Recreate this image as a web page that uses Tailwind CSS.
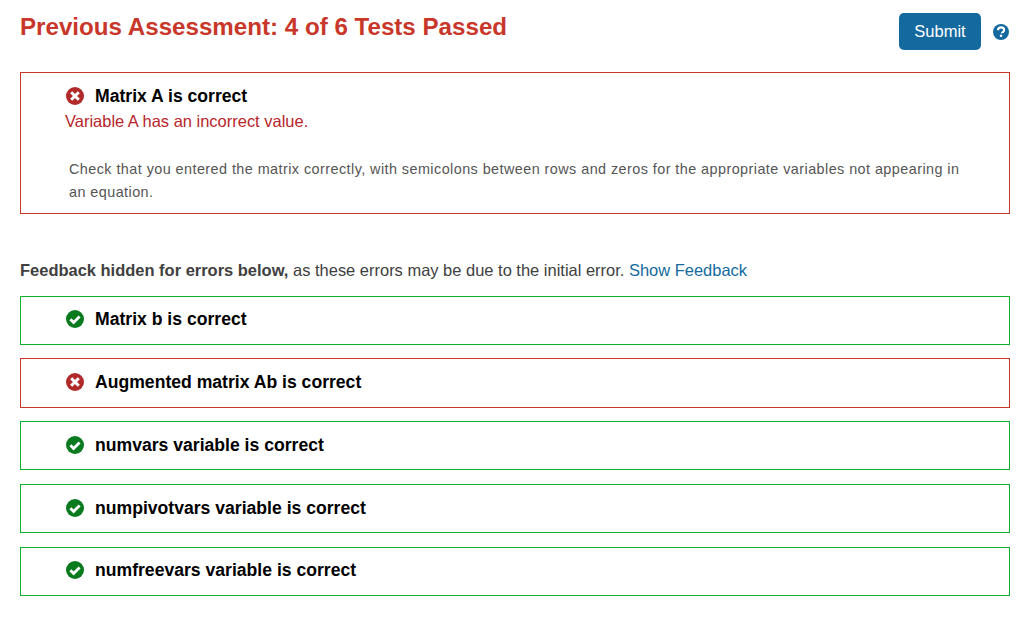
<!DOCTYPE html>
<html lang="en">
  <head>
    <meta charset="UTF-8" />
    <title>Previous Assessment</title>
    <script src="https://cdn.jsdelivr.net/npm/@tailwindcss/browser@4"></script>
  </head>
  <body class="bg-white font-['Liberation_Sans',Arial,sans-serif] text-[#404040] overflow-hidden">
    <div class="px-5 pt-[13px] pr-[25px]">
      <div class="flex justify-between items-start h-[59px]">
        <h1 class="text-[24.15px] leading-[28px] font-bold text-[#c8372a]">Previous Assessment: 4 of 6 Tests Passed</h1>
        <div class="flex items-center gap-3 mr-[1px]">
          <button class="w-[82px] h-[37px] bg-[#146a9e] text-white text-[16.5px] rounded-[5px]">Submit</button>
          <svg class="w-4 h-4" viewBox="0 0 16 16">
            <circle cx="8" cy="8" r="8" fill="#146a9e" />
            <path d="M5 6.2c0-1.8 1.3-2.8 3.1-2.8s3 1 3 2.6c0 2.2-2.2 2-2.2 3.3" fill="none" stroke="#fff" stroke-width="2.1" />
            <rect x="6.9" y="10.7" width="2.2" height="2.2" fill="#fff" />
          </svg>
        </div>
      </div>

      <div class="border border-[#c8372a] h-[142px] pl-[44px] pr-[40px] pt-[13px]">
        <div class="flex items-center gap-[11px] h-[20px]">
          <svg class="w-[18px] h-[18px] ml-[1px]" viewBox="0 0 18 18">
            <circle cx="9" cy="9" r="9" fill="#b02a2a" />
            <path d="M5.2 5.2l7.6 7.6M12.8 5.2l-7.6 7.6" stroke="#fff" stroke-width="3" />
          </svg>
          <span class="text-[17.6px] font-bold text-black">Matrix A is correct</span>
        </div>
        <p class="mt-[5px] text-[16.48px] leading-[20px] text-[#b8262c]">Variable A has an incorrect value.</p>
        <p class="mt-[27px] ml-[4px] text-[14.4px] leading-[23px] tracking-[0.44px] text-[#555555]">Check that you entered the matrix correctly, with semicolons between rows and zeros for the appropriate variables not appearing in an equation.</p>
      </div>

      <p class="mt-[46px] mb-[15.6px] text-[16.48px] leading-[20px]"><b>Feedback hidden for errors below,</b> as these errors may be due to the initial error. <a class="text-[#146a9e]">Show Feedback</a></p>

      <div class="flex flex-col gap-[13.45px]">
        <div class="border border-[#0fb02a] h-[49.3px] pl-[45px] pb-[1.5px] flex items-center gap-[11px]">
          <svg class="w-[18px] h-[18px]" viewBox="0 0 18 18">
            <circle cx="9" cy="9" r="9" fill="#0a7a1e" />
            <path d="M4.4 9.2l3.2 3.2 6-6" fill="none" stroke="#fff" stroke-width="2.8" />
          </svg>
          <span class="text-[17.6px] font-bold text-black">Matrix b is correct</span>
        </div>
        <div class="border border-[#c8372a] h-[49.3px] pl-[45px] pb-[1.5px] flex items-center gap-[11px]">
          <svg class="w-[18px] h-[18px]" viewBox="0 0 18 18">
            <circle cx="9" cy="9" r="9" fill="#b02a2a" />
            <path d="M5.2 5.2l7.6 7.6M12.8 5.2l-7.6 7.6" stroke="#fff" stroke-width="3" />
          </svg>
          <span class="text-[17.6px] font-bold text-black">Augmented matrix Ab is correct</span>
        </div>
        <div class="border border-[#0fb02a] h-[49.3px] pl-[45px] pb-[1.5px] flex items-center gap-[11px]">
          <svg class="w-[18px] h-[18px]" viewBox="0 0 18 18">
            <circle cx="9" cy="9" r="9" fill="#0a7a1e" />
            <path d="M4.4 9.2l3.2 3.2 6-6" fill="none" stroke="#fff" stroke-width="2.8" />
          </svg>
          <span class="text-[17.6px] font-bold text-black">numvars variable is correct</span>
        </div>
        <div class="border border-[#0fb02a] h-[49.3px] pl-[45px] pb-[1.5px] flex items-center gap-[11px]">
          <svg class="w-[18px] h-[18px]" viewBox="0 0 18 18">
            <circle cx="9" cy="9" r="9" fill="#0a7a1e" />
            <path d="M4.4 9.2l3.2 3.2 6-6" fill="none" stroke="#fff" stroke-width="2.8" />
          </svg>
          <span class="text-[17.6px] font-bold text-black">numpivotvars variable is correct</span>
        </div>
        <div class="border border-[#0fb02a] h-[49.3px] pl-[45px] pb-[1.5px] flex items-center gap-[11px]">
          <svg class="w-[18px] h-[18px]" viewBox="0 0 18 18">
            <circle cx="9" cy="9" r="9" fill="#0a7a1e" />
            <path d="M4.4 9.2l3.2 3.2 6-6" fill="none" stroke="#fff" stroke-width="2.8" />
          </svg>
          <span class="text-[17.6px] font-bold text-black">numfreevars variable is correct</span>
        </div>
      </div>
    </div>
  </body>
</html>
